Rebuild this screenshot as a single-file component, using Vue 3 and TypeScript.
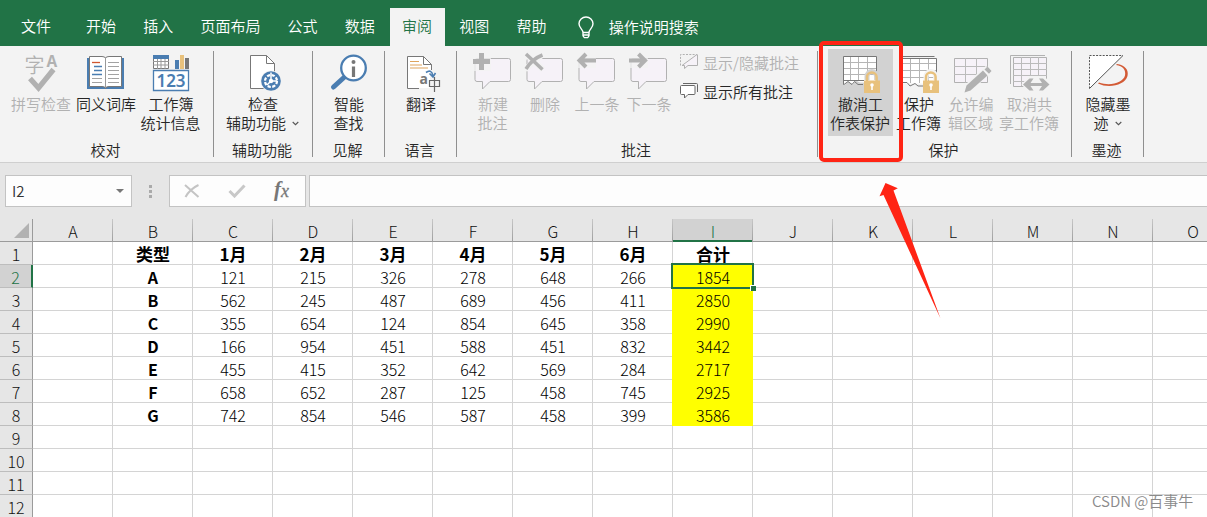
<script setup lang="ts">
const tabs: string[] = ['开始', '插入', '页面布局', '公式', '数据', '审阅', '视图', '帮助']
const activeTab = '审阅'

interface Tool { icon: string; lines: string[]; width: number; off?: boolean; pressed?: boolean; menu?: boolean }
interface Small { icon: string; label: string; off?: boolean }
interface Group { label: string; width: number; lead: number; tools: Tool[]; small?: Small[] }

const groups: Group[] = [
  {
    label: '校对', width: 214, lead: 8, tools: [
      { icon: 'spell', lines: ['拼写检查'], width: 66, off: true },
      { icon: 'book', lines: ['同义词库'], width: 64 },
      { icon: 'stats', lines: ['工作簿', '统计信息'], width: 66 },
    ],
  },
  { label: '辅助功能', width: 99, lead: 7, tools: [{ icon: 'check', lines: ['检查', '辅助功能'], width: 84, menu: true }] },
  { label: '见解', width: 72, lead: 6, tools: [{ icon: 'lookup', lines: ['智能', '查找'], width: 60 }] },
  { label: '语言', width: 72, lead: 6, tools: [{ icon: 'translate', lines: ['翻译'], width: 60 }] },
  {
    label: '批注', width: 361, lead: 10, tools: [
      { icon: 'new', lines: ['新建', '批注'], width: 52, off: true },
      { icon: 'delete', lines: ['删除'], width: 52, off: true },
      { icon: 'prev', lines: ['上一条'], width: 52, off: true },
      { icon: 'next', lines: ['下一条'], width: 52, off: true },
    ],
    small: [
      { icon: 'toggle', label: '显示/隐藏批注', off: true },
      { icon: 'all', label: '显示所有批注' },
    ],
  },
  {
    label: '保护', width: 254, lead: 10, tools: [
      { icon: 'sheet', lines: ['撤消工', '作表保护'], width: 65, pressed: true },
      { icon: 'workbook', lines: ['保护', '工作簿'], width: 52 },
      { icon: 'ranges', lines: ['允许编', '辑区域'], width: 52, off: true },
      { icon: 'unshare', lines: ['取消共', '享工作簿'], width: 65, off: true },
    ],
  },
  { label: '墨迹', width: 72, lead: 6, tools: [{ icon: 'ink', lines: ['隐藏墨', '迹'], width: 60, menu: true }] },
]

const columns: string[] = 'ABCDEFGHIJKLMNO'.split('')
const data: (string | number)[][] = [
  ['类型', '1月', '2月', '3月', '4月', '5月', '6月', '合计'],
  ['A', 121, 215, 326, 278, 648, 266, 1854],
  ['B', 562, 245, 487, 689, 456, 411, 2850],
  ['C', 355, 654, 124, 854, 645, 358, 2990],
  ['D', 166, 954, 451, 588, 451, 832, 3442],
  ['E', 455, 415, 352, 642, 569, 284, 2717],
  ['F', 658, 652, 287, 125, 458, 745, 2925],
  ['G', 742, 854, 546, 587, 458, 399, 3586],
]
const cell = (r: number, c: number): string | number => data[r - 1]?.[c - 1] ?? ''
</script>

<template>
  <div class="app">
    <nav class="tabs">
      <span class="file">文件</span>
      <span v-for="t in tabs" :key="t" class="tab" :class="{ active: t === activeTab }">{{ t }}</span>
      <svg class="bulb" width="18" height="24" viewBox="0 0 18 24" fill="none" stroke="#fff" stroke-width="1.4">
        <path d="M6 16.5C6 13.5 2 12 2 7.8a7 6.8 0 0 1 14 0C16 12 12 13.5 12 16.5zM6 19h6M7 21.6h4M6 16v3.500l1 2M12 16v3.500l-1 2" />
      </svg>
      <span class="tell">操作说明搜索</span>
    </nav>

    <section class="ribbon">
      <div v-for="g in groups" :key="g.label" class="group" :style="{ width: g.width + 'px' }">
        <div class="tools" :style="{ paddingLeft: g.lead + 'px' }">
          <div v-for="t in g.tools" :key="t.icon" class="tool" :class="{ off: t.off, pressed: t.pressed, odd: t.width % 2 }" :style="{ width: t.width + 'px' }">
            <svg class="icon" width="52" height="45" viewBox="0 0 52 45" fill="none">
              <g v-if="t.icon === 'spell'" fill="#b1b1b1">
                <text x="9.500" y="24" font-size="20">字</text>
                <text x="31.500" y="18" font-size="15.500" font-weight="700" class="latin">A</text>
                <path d="M15 29.500L23.500 39L38.500 20.500" fill="none" stroke="#b1b1b1" stroke-width="5.200" />
              </g>
              <g v-else-if="t.icon === 'book'">
                <path d="M7 9H44V40H7z" fill="#4a7db1" />
                <path d="M9.500 7.500H22Q25.500 7.500 25.500 9.500Q25.500 7.500 29 7.500H41.500V37.500H29Q25.500 37.500 25.500 39.500Q25.500 37.500 22 37.500H9.500z" fill="#fff" stroke="#777" />
                <path d="M25.500 9V39" stroke="#999" />
                <path d="M12 13.500h8" stroke="#d0562f" stroke-width="1.300" />
                <path d="M14 17.500h8M14 21.500h8M12 25.500h10" stroke="#4a7db1" stroke-width="1.300" />
                <path d="M12 29.500h10M12 33.500h10M28 13.500h11M28 17.500h11M28 21.500h11M28 25.500h11M28 29.500h11M28 33.500h11" stroke="#a2a2a2" />
              </g>
              <g v-else-if="t.icon === 'stats'">
                <path d="M8.500 8.500h15v11h-15z" fill="#fff" stroke="#777" />
                <path d="M8 12.500h16M8 16h16M12.500 9v11M16 9v11M20 9v11" stroke="#999" />
                <path d="M8 6h16v4H8z" fill="#4a7db1" />
                <path d="M30 11h4v9h-4z" fill="#4a7db1" /><path d="M35 6h4v14h-4z" fill="#e8c17c" /><path d="M40 9h4v11h-4z" fill="#777" />
                <path d="M8.500 21.500h35v20h-35z" fill="#fff" stroke="#4a7db1" stroke-width="1.300" />
                <text x="26" y="37.800" text-anchor="middle" font-size="17" font-weight="600" fill="#4a7db1" class="num">123</text>
              </g>
              <g v-else-if="t.icon === 'check'">
                <path d="M13.500 6.500H29.500L37.500 14.500V39.500H13.500z" fill="#fff" stroke="#777" />
                <path d="M29.500 6.500V14.500H37.500" stroke="#777" />
                <circle cx="34" cy="32" r="10.500" fill="#f3f3f3" /><circle cx="34" cy="32" r="9.800" fill="#4a7db1" />
                <circle cx="34" cy="32" r="6" stroke="#fff" stroke-width="2.200" stroke-dasharray="3.200 1.500" />
                <path d="M34 23.500V32H40M34 32L30 36" stroke="#fff" stroke-width="1.500" />
                <circle cx="34" cy="32" r="2.200" fill="#fff" />
              </g>
              <g v-else-if="t.icon === 'lookup'">
                <path d="M10.500 38L21.500 28" stroke="#4a7db1" stroke-width="5" stroke-linecap="round" />
                <circle cx="30.500" cy="19" r="12.300" fill="#fff" stroke="#4a7db1" stroke-width="2.300" />
                <path d="M28.900 17.500h3.200v10.500h-3.200z" fill="#777" /><circle cx="30.500" cy="13" r="2" fill="#777" />
              </g>
              <g v-else-if="t.icon === 'translate'">
                <path d="M12.500 7.500H28.500L36.500 15.500V39.500H12.500z" fill="#fff" stroke="#777" />
                <path d="M28.500 7.500V15.500H36.500" stroke="#777" />
                <path d="M15 12.500h9M15 16h12M15 19h18" stroke="#dfa45c" stroke-width="1.200" />
                <path d="M24 21h18v21H24z" fill="#f3f3f3" /><path d="M24 21h11v18H24z" fill="#fff" />
                <text x="24.500" y="35" font-size="14" font-weight="700" fill="#777" class="num">a</text>
                <path d="M34.500 31.500h10v6h-10zM39.500 28V43" stroke="#666" stroke-width="1.200" />
                <path d="M31 23.500Q36.500 19.500 38 27M34.500 24.500L38 28L40.500 24" stroke="#4a7db1" stroke-width="1.600" />
              </g>
              <g v-else-if="['new', 'delete', 'prev', 'next'].includes(t.icon)">
                <path d="M10 9.500H41.500a2 2 0 0 1 2 2V30.500a2 2 0 0 1-2 2H23L15.500 40V32.500H10a2 2 0 0 1-2-2V11.500a2 2 0 0 1 2-2z" fill="#f6f2f8" stroke="#b1b1b1" />
                <g v-if="t.icon === 'new'"><path d="M5 3h19v19H5z" fill="#f3f3f3" class="halo" /><path d="M6 12.500H23M14.500 4V21" stroke="#b1b1b1" stroke-width="5" /></g>
                <g v-else-if="t.icon === 'delete'"><path d="M6 4.500L24 20.500M24 5L6 20.500" stroke="#f3f3f3" stroke-width="6" /><path d="M7 5L23.500 20.500M23.500 6Q13 10 7 20" stroke="#b1b1b1" stroke-width="3.500" /></g>
                <g v-else-if="t.icon === 'prev'"><path d="M5 5h20v14H5z" fill="#f3f3f3" class="halo" /><path d="M8 11.500H25M15 5L8.500 11.500L15 18" stroke="#b1b1b1" stroke-width="4" /></g>
                <g v-else><path d="M5 5h20v14H5z" fill="#f3f3f3" class="halo" /><path d="M6 11.500H23M15.500 5L22 11.500L15.500 18" stroke="#b1b1b1" stroke-width="4" /></g>
              </g>
              <g v-else-if="t.icon === 'sheet'">
                <path d="M9.500 7.500H42.500V33.500H26L21 31L19 35.500L14 32.500L11 35.500H9.500z" fill="#fff" />
                <path d="M9 13.500H43M9 19.500H43M9 25.500H43M16.500 7V32M24.500 7V32M33.500 7V32" stroke="#b5b5b5" />
                <path d="M29 35.500H24L20.500 32.500L18 35.500L14 32.500L10 35.500H9.500V7.500H42.500V28M10 31.500H30" stroke="#777" />
              </g>
              <g v-else-if="t.icon === 'workbook'">
                <path d="M8 7.500H41.500" stroke="#777" /><path d="M8.500 9.500H43.500V34.500H8.500z" fill="#fff" />
                <path d="M8 14.500H43M8 21.500H43M8 28.500H43M17.500 10V34M26.500 10V34M35.500 10V34" stroke="#b5b5b5" />
                <path d="M8 9.500H43.500V26M8 33.500H14L17 37L22 34.500L25 37H30" stroke="#777" />
              </g>
              <g v-else-if="t.icon === 'ranges'">
                <path d="M9.500 9.500H42.500V33.500H9.500z" fill="#f6f2f8" stroke="#b1b1b1" />
                <path d="M9 17.500H43M9 25.500H43M20.500 9V34M31.500 9V34" stroke="#bbb" />
                <path d="M22 40L44 20" stroke="#f3f3f3" stroke-width="9" />
                <path d="M19.500 43.500L21.500 36.500L38 21.500L42.500 26.500L25.500 41.500zM39.500 20.500L42.500 17.500L46.500 22L44 24.800z" fill="#b1b1b1" />
              </g>
              <g v-else-if="t.icon === 'unshare'">
                <path d="M7.500 35V6.500H42" stroke="#b1b1b1" /><path d="M10.500 8.500H43.500V37.500H10.500z" fill="#f6f2f8" stroke="#b1b1b1" />
                <path d="M10 14.500H44M10 20.500H44M10 26.500H44M10 32.500H22M18.500 8V37M27.500 8V37M35.500 8V37" stroke="#bbb" />
                <path d="M18.500 35.500L26 27H41L49 35.500L42 44H26z" fill="#f3f3f3" />
                <path d="M26 35.500H41" stroke="#b1b1b1" stroke-width="3" />
                <path d="M20 35.500L26.500 29.500H30.500L26.500 35.500L30.500 41.500H26.500zM46.500 35.500L40 29.500H36L40 35.500L36 41.500H40z" fill="#b1b1b1" />
              </g>
              <g v-else-if="t.icon === 'ink'">
                <path d="M7.500 6.500H41L7.500 39.500z" fill="#fff" />
                <path d="M7.500 39.500V6.500H41" stroke="#555" stroke-dasharray="2 1.300" />
                <path d="M41 6.500L7.500 39.500" stroke="#555" />
                <path d="M35 15C43 16 47 21 45.500 27C43 36 27 40 16 34.500L17 33.500C28 37.500 41 34 43 26.500C44 21 41 17 34 16z" fill="#d35a35" />
              </g>
              <g v-if="t.icon === 'sheet' || t.icon === 'workbook'">
                <path d="M33 31V27.500a4.800 5 0 0 1 9.600 0V31" :stroke="t.pressed ? '#d2d2d2' : '#f3f3f3'" stroke-width="5" />
                <path d="M33 32V28a4.800 4.500 0 0 1 9.600 0V32" stroke="#e8c17c" stroke-width="2.500" />
                <path d="M30 31.500h16V44h-16z" fill="#e8c17c" />
                <circle cx="38" cy="36" r="1.800" fill="#fff" /><path d="M37.200 36h1.600v5h-1.600z" fill="#fff" />
              </g>
            </svg>
            <div v-for="(l, i) in t.lines" :key="l" class="line">
              {{ l }}<svg v-if="t.menu && i === t.lines.length - 1" class="chev" width="7" height="5" viewBox="0 0 7 5"><path d="M.7 1L3.500 3.700L6.300 1" fill="none" stroke="#555" stroke-width="1.100" /></svg>
            </div>
          </div>
          <div v-if="g.small" class="smalls">
            <div v-for="s in g.small" :key="s.icon" class="small" :class="{ off: s.off }">
              <svg width="20" height="18" viewBox="0 0 20 18" fill="none">
                <g v-if="s.icon === 'toggle'" stroke="#b1b1b1">
                  <path d="M1.500 12.500V1.500H18" stroke-dasharray="2 1.300" />
                  <path d="M18.500 1.500V12.500H9L5.500 15.500V12.500H3L18 1.500" fill="#f6f2f8" />
                </g>
                <g v-else stroke="#666">
                  <path d="M4 1.500H17.500a1 1 0 0 1 1 1V10" />
                  <path d="M2.500 3.500H15a1 1 0 0 1 1 1V11.500a1 1 0 0 1-1 1H9L5.500 16V12.500H2.500a1 1 0 0 1-1-1V4.500a1 1 0 0 1 1-1z" fill="#fff" />
                </g>
              </svg>
              <span>{{ s.label }}</span>
            </div>
          </div>
        </div>
        <div class="caption">{{ g.label }}</div>
      </div>
    </section>

    <section class="formula">
      <div class="namebox"><span>I2</span><i class="caret"></i></div>
      <div class="grip"><i></i><i></i><i></i></div>
      <div class="actions">
        <svg width="16" height="14" viewBox="0 0 16 14" fill="none" stroke="#c4c4c4" stroke-width="2"><path d="M1 1L14.500 13M14.500 1Q6 5 1.500 13" /></svg>
        <svg width="18" height="14" viewBox="0 0 18 14" fill="none" stroke="#c8c8c8" stroke-width="3"><path d="M1.500 7L6.500 12L16.500 1.500" /></svg>
        <span class="fx">f<small>x</small></span>
      </div>
      <div class="input"></div>
    </section>

    <section class="sheet">
      <div class="row head">
        <div class="corner"><i></i></div>
        <div v-for="c in columns" :key="c" class="col" :class="{ sel: c === 'I' }">{{ c }}</div>
      </div>
      <div v-for="r in 12" :key="r" class="row">
        <div class="rownum" :class="{ sel: r === 2 }">{{ r }}</div>
        <div
          v-for="(c, i) in columns" :key="c" class="cell"
          :class="{ bold: r === 1 || i === 1, yellow: i === 8 && r > 1 && r < 9 }"
        >{{ cell(r, i) }}<b v-if="r === 2 && c === 'I'" class="cursor"><i></i></b></div>
      </div>
    </section>

    <div class="highlight"></div>
    <svg class="pointer" width="64" height="140" viewBox="0 0 64 140"><path d="M7.500 3L19.800 8.300L15.500 10.500L62.500 138.500L5.500 15L1.500 16.300z" fill="#ff2414" /></svg>
    <div class="mark">CSDN @百事牛</div>
  </div>
</template>

<style>
html, body { margin: 0; overflow: hidden; }
</style>

<style scoped>
.app { position: relative; width: 1207px; height: 517px; overflow: hidden; background: #e6e6e6; color: #262626; font: 350 15px/19px "Noto Sans CJK SC", sans-serif; }
.app * { box-sizing: border-box; }
svg { flex: none; display: block; }
.tabs { display: flex; height: 46px; padding-top: 8px; background: #217346; color: #fff; line-height: 36px; white-space: nowrap; }
.file { width: 73px; padding-left: 21px; }
.tab { margin: 0 1px; padding: 0 13.200px 0 12px; }
.tab.active { background: #f3f3f3; color: #217346; }
.bulb { margin: 8px 0 0 16px; }
.tell { margin-left: 14px; line-height: 37px; }
.ribbon { display: flex; height: 117px; background: #f3f3f3; border-bottom: 1px solid #cfcfcf; }
.group { position: relative; flex: none; height: 116px; padding-top: 3px; }
.group::after { content: ""; position: absolute; right: 0; top: 5px; height: 106px; width: 1px; background: #8f8f8f; }
.tools { display: flex; height: 87px; }
.tool { flex: none; height: 87px; display: flex; flex-direction: column; align-items: center; }
.tool.pressed { background: #d2d2d2; }
.icon { width: 52px; height: 45px; overflow: visible; }
.odd .icon { margin-right: 1px; }
.line { display: flex; align-items: center; height: 19px; white-space: nowrap; }
.line + .line { padding-right: 1px; }
.chev { margin-left: 6px; margin-top: 1px; }
.off { color: #b1b1b1; }
.latin { font-family: "Open Sans", sans-serif; }
.num { font-family: "Noto Sans", sans-serif; }
.halo { opacity: .75; }
.smalls { margin-top: -1px; padding-left: 4px; }
.small { display: flex; align-items: center; gap: 4px; height: 29px; white-space: nowrap; }
.small svg { margin-top: -1px; }
.caption { height: 24px; margin-top: 2px; padding-right: 3px; text-align: center; line-height: 24px; }
.formula { display: flex; height: 56px; padding: 12px 0 12px 5px; }
.namebox, .actions, .input { height: 32px; border: 1px solid #c3c3c3; background: #fdfdfd; }
.namebox { width: 127px; padding: 0 7px 0 6px; display: flex; align-items: center; justify-content: space-between; color: #333; }
.namebox span { margin-top: -2px; }
.caret { border: 4px solid transparent; border-top-color: #777; border-bottom: 0; }
.grip { width: 37px; display: flex; flex-direction: column; align-items: center; justify-content: center; gap: 2px; }
.grip i { width: 3px; height: 3px; background: #aaa; }
.actions { width: 137px; display: flex; align-items: center; justify-content: space-between; padding: 0 16px 0 14px; }
.fx { font: italic bold 21px/26px "Liberation Serif", serif; color: #777; margin-top: -3px; }
.fx small { position: relative; top: 1px; font-size: 18px; font-weight: 400; -webkit-text-stroke: .3px #777; }
.input { flex: 1; margin-left: 3px; border-right: 0; }
.sheet { width: 1233px; font-size: 16px; font-weight: 300; color: #000; }
.row { display: flex; height: 23px; text-align: center; line-height: 24px; }
.corner, .rownum { flex: none; width: 33px; border-right: 1px solid #9b9b9b; }
.corner { display: flex; justify-content: flex-end; align-items: flex-end; padding: 0 3px 3px 0; }
.corner i { border-left: 15px solid transparent; border-bottom: 15px solid #b2b2b2; }
.rownum { border-bottom: 1px solid #bdbdbd; color: #111; }
.head { border-bottom: 1px solid #9b9b9b; }
.head .col { flex: none; width: 80px; height: 23px; padding-left: 1px; border-right: 1px solid; border-image: linear-gradient(#c9c9c9, #9b9b9b) 1; color: #111; }
.head .col.sel { height: 23px; background: #d2d2d2; color: #217346; box-shadow: inset 0 -2px #217346; }
.rownum.sel { background: #d2d2d2; color: #217346; border-right: 2px solid #217346; }
.cell { position: relative; flex: none; width: 80px; padding-left: 1px; background: #fff; border-right: 1px solid #d4d4d4; border-bottom: 1px solid #d4d4d4; }
.bold { font-weight: 700; }
.row:nth-child(2) .bold { font-size: 17px; }
.yellow { background: #ff0; border-color: #ff0; box-shadow: -1px 0 #ff0; }
.cursor { position: absolute; left: -2px; top: -2px; width: 83px; height: 26px; border: 2px solid #217346; }
.cursor i { position: absolute; right: -4px; bottom: -4px; width: 6px; height: 6px; background: #217346; border: 1px solid #fff; border-width: 1px 0 0 1px; }
.cell:has(.cursor) { z-index: 2; }
.highlight { position: absolute; left: 819px; top: 41px; width: 84px; height: 121px; border: 4px solid #ff2414; border-radius: 5px; }
.pointer { position: absolute; left: 878px; top: 180px; }
.mark { position: absolute; left: 1092px; top: 491px; font-size: 15px; color: #8a8a8a; white-space: nowrap; }
</style>
